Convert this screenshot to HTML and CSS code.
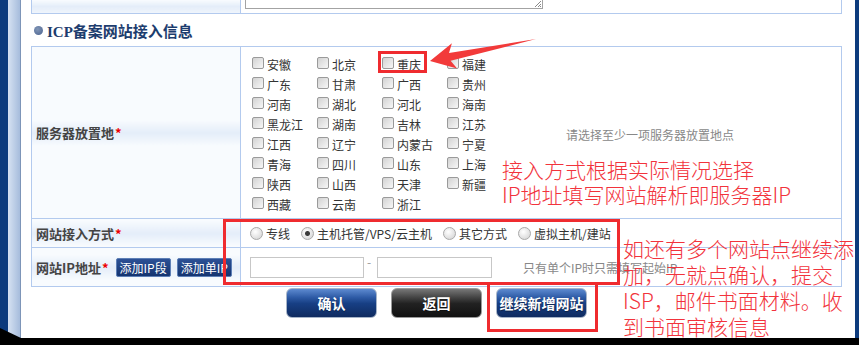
FILE: index.html
```html
<!doctype html>
<html lang="zh">
<head>
  <meta charset="utf-8">
  <title>ICP备案网站接入信息</title>
  <link rel="stylesheet" href="styles.css">
</head>
<body>
  <div class="window">
    <div class="frame-left"></div>
    <div class="page">
      <table class="tbl tbl-prev">
        <colgroup><col class="key-col"><col></colgroup>
        <tr>
          <td class="key"></td>
          <td class="val">
            <div class="textarea-end">
              <svg class="grip" width="8" height="8" viewBox="0 0 8 8"><path d="M7 1L1 7M7 4L4 7M7 6L6 7" stroke="#8a8a8a" stroke-width="1"/></svg>
            </div>
          </td>
        </tr>
      </table>

      <h3 class="section"><span class="dot"></span>ICP备案网站接入信息</h3>

      <table class="tbl">
        <colgroup><col class="key-col"><col></colgroup>
        <tr>
          <td class="key"><span class="lbl">服务器放置地<span class="req">*</span></span></td>
          <td class="val val-area">
            <div class="area-wrap">
              <div class="area-grid">
                <label class="chk"><input type="checkbox">安徽</label>
                <label class="chk"><input type="checkbox">北京</label>
                <label class="chk"><input type="checkbox">重庆</label>
                <label class="chk"><input type="checkbox">福建</label>
                <label class="chk"><input type="checkbox">广东</label>
                <label class="chk"><input type="checkbox">甘肃</label>
                <label class="chk"><input type="checkbox">广西</label>
                <label class="chk"><input type="checkbox">贵州</label>
                <label class="chk"><input type="checkbox">河南</label>
                <label class="chk"><input type="checkbox">湖北</label>
                <label class="chk"><input type="checkbox">河北</label>
                <label class="chk"><input type="checkbox">海南</label>
                <label class="chk"><input type="checkbox">黑龙江</label>
                <label class="chk"><input type="checkbox">湖南</label>
                <label class="chk"><input type="checkbox">吉林</label>
                <label class="chk"><input type="checkbox">江苏</label>
                <label class="chk"><input type="checkbox">江西</label>
                <label class="chk"><input type="checkbox">辽宁</label>
                <label class="chk"><input type="checkbox">内蒙古</label>
                <label class="chk"><input type="checkbox">宁夏</label>
                <label class="chk"><input type="checkbox">青海</label>
                <label class="chk"><input type="checkbox">四川</label>
                <label class="chk"><input type="checkbox">山东</label>
                <label class="chk"><input type="checkbox">上海</label>
                <label class="chk"><input type="checkbox">陕西</label>
                <label class="chk"><input type="checkbox">山西</label>
                <label class="chk"><input type="checkbox">天津</label>
                <label class="chk"><input type="checkbox">新疆</label>
                <label class="chk"><input type="checkbox">西藏</label>
                <label class="chk"><input type="checkbox">云南</label>
                <label class="chk"><input type="checkbox">浙江</label>
              </div>
              <span class="hint">请选择至少一项服务器放置地点</span>
            </div>
          </td>
        </tr>
        <tr>
          <td class="key"><span class="lbl">网站接入方式<span class="req">*</span></span></td>
          <td class="val">
            <div class="radio-row">
              <label class="rad"><input type="radio" name="mode">专线</label>
              <label class="rad"><input type="radio" name="mode" checked>主机托管/VPS/云主机</label>
              <label class="rad"><input type="radio" name="mode">其它方式</label>
              <label class="rad"><input type="radio" name="mode">虚拟主机/建站</label>
            </div>
          </td>
        </tr>
        <tr>
          <td class="key">
            <div class="ip-key">
              <span class="lbl">网站IP地址<span class="req">*</span></span>
              <button class="mini-btn" type="button">添加IP段</button>
              <button class="mini-btn" type="button">添加单IP</button>
            </div>
          </td>
          <td class="val">
            <div class="ip-row">
              <input class="ip-input" type="text">
              <span class="dash">-</span>
              <input class="ip-input ip-input-2" type="text">
              <span class="ip-hint">只有单个IP时只需填写起始IP</span>
            </div>
          </td>
        </tr>
      </table>

      <div class="actions">
        <button class="big-btn" type="button">确认</button>
        <button class="big-btn big-btn-dark" type="button">返回</button>
        <button class="big-btn" type="button">继续新增网站</button>
      </div>
    </div>
    <div class="frame-right"></div>
  </div>

  <!-- 标注 -->
  <svg class="marks" width="859" height="345" viewBox="0 0 859 345">
    <g fill="none" stroke="#ef2b2f" stroke-width="3">
      <rect x="379.5" y="52.5" width="46" height="19"/>
      <rect x="224.5" y="220.5" width="394" height="63"/>
      <path d="M488.5 284.5V330.5H596.5V284.5"/>
    </g>
    <polygon fill="#f23a3a" points="430,61 451.9,43.2 449,53 536,39 450.6,60.8 457.1,68.6"/>
  </svg>
  <div class="note note-1">接入方式根据实际情况选择<br>IP地址填写网站解析即服务器IP</div>
  <div class="note note-2">如还有多个网站点继续添<br>加，无就点确认，提交<br>ISP，邮件书面材料。收<br>到书面审核信息</div>
</body>
</html>
```

FILE: styles.css
```css
html, body {
  margin: 0;
  padding: 0;
}
body {
  position: relative;
  width: 859px;
  height: 345px;
  overflow: hidden;
  background: #000;
  font-family: "Noto Sans CJK SC", "Liberation Sans", sans-serif;
  font-size: 12px;
  color: #333;
}
.window {
  display: flex;
  height: 338px;
}
.frame-left {
  width: 20px;
  display: flex;
  background: linear-gradient(to right, #0d3b7d 0, #0d3b7d 8px, #d6e2f2 8px, #a6bcdc 20px);
  border-right: 1px solid #7d95b8;
  clip-path: polygon(0 0, 100% 0, 100% 100%, 0 calc(100% - 10px));
}
.frame-right {
  width: 4px;
  background: #0d3b7d;
}
.page {
  flex: 1;
  background: #fff;
  padding: 0 13px 0 10px;
}

/* tables */
.tbl {
  width: 811px;
  border-collapse: collapse;
  table-layout: fixed;
}
.key-col {
  width: 209px;
}
.tbl td {
  border: 1px solid #b3caee;
  padding: 0;
}
.tbl-prev td {
  border-top: 0;
}
.tbl-prev .val {
  padding: 0 0 4px 4px;
  vertical-align: bottom;
  line-height: 0;
}
.textarea-end {
  position: relative;
  width: 296px;
  height: 8px;
  border: 1px solid #a3a3a3;
  border-top: 0;
}
.grip {
  position: absolute;
  right: 0;
  bottom: 0;
}
.key {
  padding-left: 4px !important;
  background: linear-gradient(to bottom, #f8fbfe 0, #f8fbfe calc(50% - 13px), #e4edf9 50%, #f8fbfe calc(50% + 13px), #f8fbfe 100%);
}
.lbl {
  font-size: 13px;
  font-weight: bold;
  color: #444;
  white-space: nowrap;
}
.req {
  color: #e00;
  margin-left: 1px;
}

/* section title */
.section {
  margin: 0;
  height: 32px;
  display: flex;
  align-items: center;
  padding-left: 3px;
  font-family: "Liberation Serif", "Noto Sans CJK SC", serif;
  font-size: 15px;
  font-weight: bold;
  color: #1d3d6e;
}
.dot {
  width: 9px;
  height: 9px;
  border-radius: 50%;
  background: radial-gradient(circle at 40% 35%, #8196b6, #4a6290);
  margin-right: 4px;
}

/* server area */
.val-area {
  padding: 7px 0 4px 11px !important;
}
.area-wrap {
  display: flex;
  align-items: center;
}
.area-grid {
  display: grid;
  grid-template-columns: repeat(4, 65px);
  grid-auto-rows: 20px;
}
.chk, .rad {
  display: flex;
  align-items: center;
  white-space: nowrap;
  color: #333;
}
.chk input {
  appearance: none;
  width: 12px;
  height: 12px;
  margin: 0 3px 2px 0;
  border: 1px solid #9a9a9a;
  border-radius: 2px;
  background: linear-gradient(135deg, #d2d2d2, #f7f7f7);
}
.hint {
  margin-left: 54px;
  color: #888;
  font-size: 12px;
}

/* access mode */
.radio-row {
  height: 28px;
  display: flex;
  align-items: center;
  padding-left: 9px;
}
.rad {
  margin-right: 11px;
}
.rad input {
  appearance: none;
  width: 13px;
  height: 13px;
  margin: 0 3px 0 0;
  border: 1px solid #aaa;
  border-radius: 50%;
  background: radial-gradient(circle at 40% 35%, #fff, #cfcfcf);
}
.rad input:checked {
  background: radial-gradient(circle, #3a3a3a 0, #3a3a3a 2px, transparent 3px), radial-gradient(circle at 40% 35%, #fff, #cfcfcf);
}

/* ip */
.ip-key {
  display: flex;
  align-items: center;
}
.mini-btn {
  height: 19px;
  margin-left: 7px;
  padding: 0 3px;
  border: 1px solid #5d7fb6;
  border-radius: 2px;
  background: linear-gradient(#2c5196, #143470);
  color: #fff;
  font-family: inherit;
  font-size: 12px;
  white-space: nowrap;
}
.mini-btn + .mini-btn {
  margin-left: 6px;
}
.ip-row {
  height: 38px;
  display: flex;
  align-items: center;
  padding-left: 9px;
}
.ip-input {
  width: 114px;
  height: 21px;
  box-sizing: border-box;
  border: 1px solid #c7c7c7;
  margin: 0;
}
.ip-input-2 {
  width: 115px;
}
.dash {
  width: 13px;
  color: #999;
  margin-bottom: 12px;
  text-align: left;
  padding-left: 3px;
  box-sizing: border-box;
}
.ip-hint {
  margin-left: 31px;
  color: #888;
  white-space: nowrap;
}

/* buttons */
.actions {
  display: flex;
  justify-content: center;
  gap: 14px;
  padding-top: 1px;
  width: 811px;
  line-height: 0;
}
.big-btn {
  width: 91px;
  height: 30px;
  border: 1px solid #a6b4c8;
  border-radius: 6px;
  background: linear-gradient(to bottom, #5d8ad0 0, #2e5ba6 30%, #173f84 52%, #0f2b60 100%);
  color: #fff;
  font-family: inherit;
  font-size: 14px;
  font-weight: bold;
  line-height: 28px;
  text-shadow: 0 1px 1px #0006;
  padding: 0;
}
.big-btn-dark {
  background: linear-gradient(to bottom, #777 0, #444 30%, #222 52%, #111 100%);
  border-color: #9a9a9a;
}

/* annotation layer */
.marks {
  position: absolute;
  left: 0;
  top: 0;
  pointer-events: none;
}
.note {
  position: absolute;
  color: #f2333c;
  font-size: 21px;
  font-weight: 300;
  white-space: nowrap;
}
.note-1 {
  left: 502px;
  top: 157px;
  line-height: 25px;
}
.note-2 {
  left: 623px;
  top: 235px;
  line-height: 26px;
}
```
